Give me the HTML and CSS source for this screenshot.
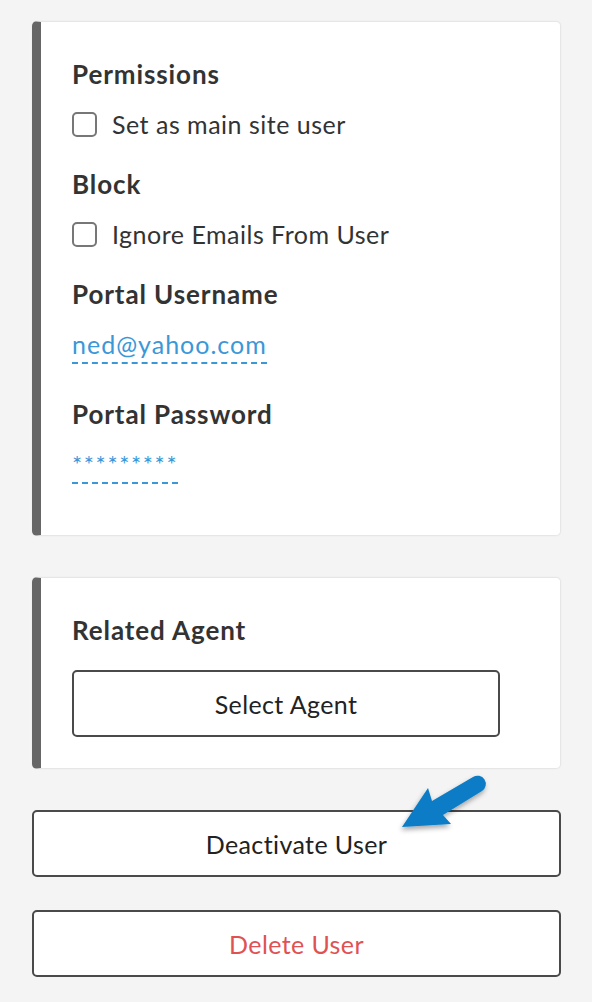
FILE: index.html
```html
<!DOCTYPE html>
<html>
<head>
<meta charset="utf-8">
<link rel="stylesheet" href="styles.css">
</head>
<body>
<div class="page">
  <section class="card">
    <h3 class="label">Permissions</h3>
    <label class="check"><span class="box"></span><span>Set as main site user</span></label>
    <h3 class="label sp">Block</h3>
    <label class="check"><span class="box"></span><span>Ignore Emails From User</span></label>
    <h3 class="label sp">Portal Username</h3>
    <div class="field"><span class="editable email">ned@yahoo.com</span></div>
    <h3 class="label sp2">Portal Password</h3>
    <div class="field last"><span class="editable pass">*********</span></div>
  </section>

  <section class="card card2">
    <h3 class="label">Related Agent</h3>
    <button class="btn select">Select Agent</button>
  </section>

  <div class="actions">
    <button class="btn wide">Deactivate User</button>
    <button class="btn wide danger">Delete User</button>
    <svg class="arrow" width="110" height="80" viewBox="380 760 110 80">
      <defs>
        <filter id="sh" x="-30%" y="-30%" width="160%" height="160%">
          <feDropShadow dx="-1" dy="3" stdDeviation="2.5" flood-color="#000" flood-opacity="0.35"/>
        </filter>
      </defs>
      <path filter="url(#sh)" fill="#0a7cc6" d="M402,826 L428,787 L432,800 L473,776 A8,8 0 0 1 482,790 L443,814 L451,823 Z"/>
    </svg>
  </div>
</div>
</body>
</html>
```
FILE: styles.css
```css
html, body {
  margin: 0;
  padding: 0;
  background: #f4f4f4;
}
body {
  font-family: "Source Sans Pro", Lato, "Liberation Sans", sans-serif;
  color: #333;
}
.page {
  padding: 21px 31px 0 32px;
  display: flex;
  flex-direction: column;
}
.card {
  background: #fff;
  border: 1px solid #e6e6e6;
  border-left: 9px solid #666;
  border-radius: 5px;
  box-shadow: 0 0 2px rgba(0,0,0,0.05);
  padding: 34px 30px 31px 31px;
  display: flex;
  flex-direction: column;
  align-items: flex-start;
}
.card2 {
  margin-top: 41px;
  padding-bottom: 31px;
}
.label {
  margin: 0;
  font-size: 26px;
  line-height: 36px;
  font-weight: 700;
  letter-spacing: 0.9px;
  color: #333;
}
.label.sp { margin-top: 24px; }
.label.sp2 { margin-top: 32px; }
.check {
  margin-top: 14px;
  display: flex;
  align-items: center;
  gap: 15px;
  font-size: 25px;
  line-height: 36px;
  letter-spacing: 0.5px;
  color: #333;
}
.box {
  width: 21px;
  height: 21px;
  border: 2px solid #777;
  border-radius: 5px;
  box-sizing: content-box;
}
.field {
  margin-top: 14px;
  display: flex;
}
.field.last { margin-bottom: 20px; }
.editable {
  font-size: 25px;
  line-height: 36px;
  color: #3b98d8;
  border-bottom: 2px dashed #3b98d8;
}
.editable.email {
  letter-spacing: 1px;
}
.editable.pass {
  font-size: 24px;
  letter-spacing: 1.6px;
  width: 106px;
}
.btn {
  font-family: inherit;
  background: #fff;
  border: 2px solid #4a4a4a;
  border-radius: 5px;
  font-size: 25px;
  letter-spacing: 0.4px;
  color: #222;
  padding: 0;
  height: 67px;
}
.select {
  margin-top: 22px;
  width: 428px;
}
.actions {
  position: relative;
  margin-top: 41px;
  display: flex;
  flex-direction: column;
  gap: 33px;
}
.wide {
  width: 100%;
}
.danger {
  color: #e05252;
}
.arrow {
  position: absolute;
  left: 348px;
  top: -49px;
}
```
